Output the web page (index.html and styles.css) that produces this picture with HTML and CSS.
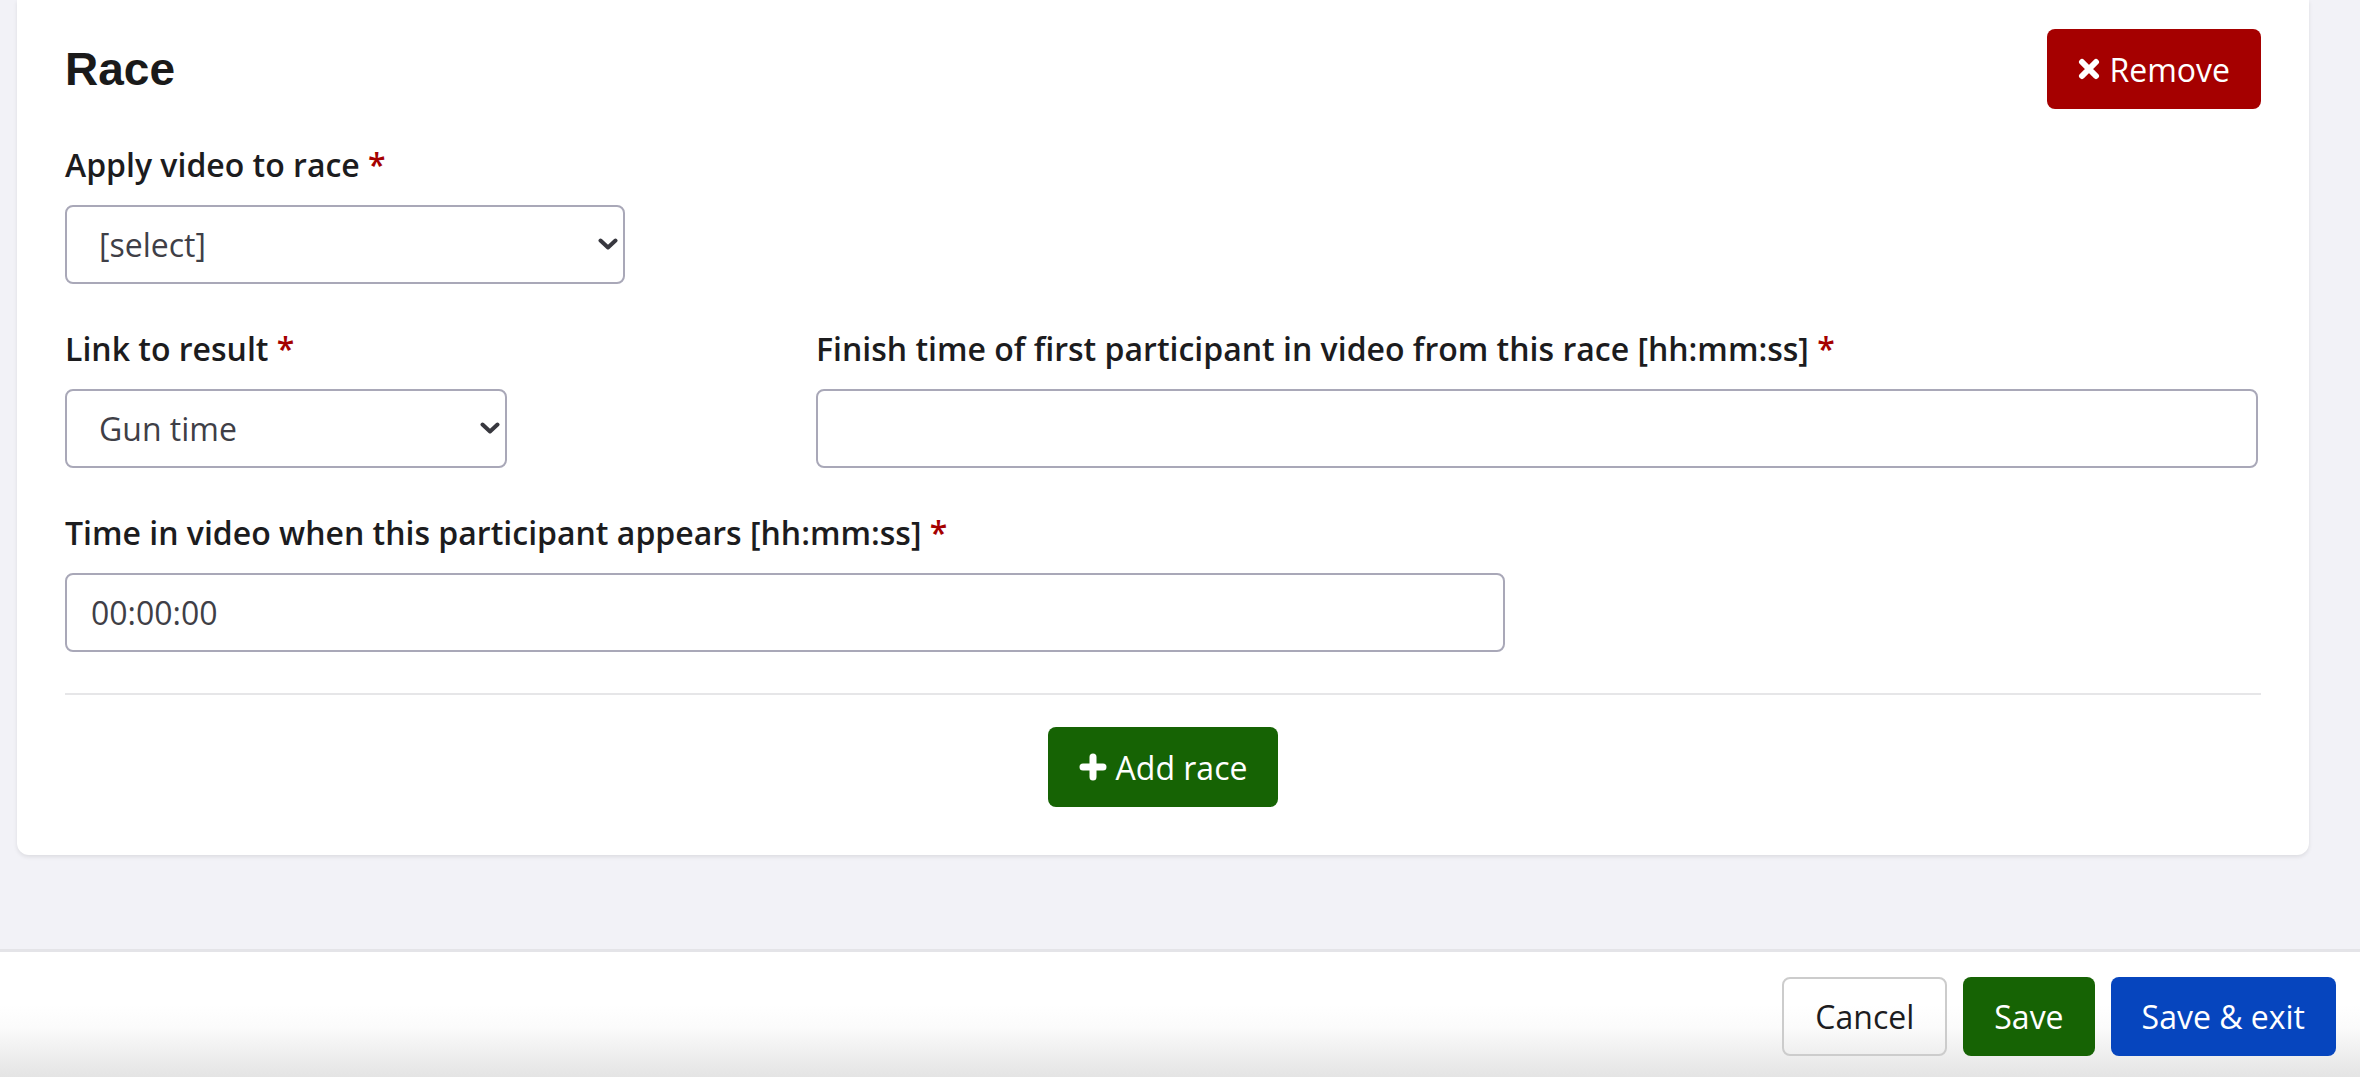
FILE: index.html
```html
<!DOCTYPE html>
<html lang="en">
<head>
<meta charset="utf-8">
<title>Race</title>
<link rel="stylesheet" href="styles.css">
</head>
<body>
<main class="page">
  <section class="card">
    <div class="card-header">
      <h2 class="card-title">Race</h2>
      <button class="btn btn-danger" type="button">
        <svg class="icon icon-x" viewBox="0 0 22 22" aria-hidden="true"><path d="M4 4 L18 18 M18 4 L4 18"/></svg>
        Remove
      </button>
    </div>

    <div class="form-group">
      <label class="form-label">Apply video to race <span class="req">*</span></label>
      <div class="select-wrap select-race">
        <select class="form-select"><option>[select]</option></select>
        <svg class="chevron" viewBox="0 0 20 12" aria-hidden="true"><path d="M2.5 2.5 L10 9.5 L17.5 2.5"/></svg>
      </div>
    </div>

    <div class="form-row">
      <div class="form-group">
        <label class="form-label">Link to result <span class="req">*</span></label>
        <div class="select-wrap select-result">
          <select class="form-select"><option>Gun time</option></select>
          <svg class="chevron" viewBox="0 0 20 12" aria-hidden="true"><path d="M2.5 2.5 L10 9.5 L17.5 2.5"/></svg>
        </div>
      </div>
      <div class="form-group">
        <label class="form-label">Finish time of first participant in video from this race [hh:mm:ss] <span class="req">*</span></label>
        <input class="form-input input-finish" type="text" value="">
      </div>
    </div>

    <div class="form-group">
      <label class="form-label">Time in video when this participant appears [hh:mm:ss] <span class="req">*</span></label>
      <input class="form-input input-time" type="text" value="00:00:00">
    </div>

    <hr class="divider">

    <div class="center-actions">
      <button class="btn btn-success" type="button">
        <svg class="icon icon-plus" viewBox="0 0 28 28" aria-hidden="true"><path d="M14 4 L14 24 M4 14 L24 14"/></svg>
        Add race
      </button>
    </div>
  </section>
</main>

<footer class="footer">
  <button class="btn btn-default" type="button">Cancel</button>
  <button class="btn btn-success" type="button">Save</button>
  <button class="btn btn-primary" type="button">Save &amp; exit</button>
</footer>
</body>
</html>
```

FILE: styles.css
```css
* { box-sizing: border-box; }

html, body {
  margin: 0;
  padding: 0;
  height: 100%;
}

body {
  display: flex;
  flex-direction: column;
  height: 100vh;
  overflow: hidden;
  background: #f2f2f7;
  font-family: "Open Sans", "DejaVu Sans", sans-serif;
  color: #1c1c1e;
}

.page {
  flex: 1;
  padding: 0 51px 0 17px;
}

.card {
  background: #ffffff;
  border-radius: 0 0 12px 12px;
  box-shadow: 0 2px 4px rgba(0, 0, 0, 0.09);
  padding: 29px 48px 48px;
}

.card-header {
  display: flex;
  align-items: center;
  justify-content: space-between;
  margin-bottom: 32px;
}

.card-title {
  margin: 0;
  font-family: "Liberation Sans", Arial, sans-serif;
  font-weight: 700;
  font-size: 46px;
  line-height: 52px;
  color: #1a1a1a;
}

.form-group {
  margin-bottom: 41px;
}

.form-label {
  display: block;
  font-size: 32px;
  font-weight: 600;
  line-height: 48px;
  margin-bottom: 16px;
  color: #1c1c1e;
  white-space: nowrap;
}

.req {
  color: #a50000;
}

.select-wrap {
  position: relative;
}

.select-race { width: 560px; }
.select-result { width: 442px; }

.form-select,
.form-input {
  display: block;
  width: 100%;
  height: 79px;
  border: 2px solid #a9a8b8;
  border-radius: 8px;
  background: #ffffff;
  font-family: "Open Sans", sans-serif;
  font-size: 32px;
  color: #3f3f47;
  outline: none;
}

.form-select {
  -webkit-appearance: none;
  appearance: none;
  padding: 0 40px 0 32px;
}

.form-input {
  padding: 0 24px;
}

.input-time {
  width: 1440px;
}

.input-finish {
  width: calc(100% - 3px);
}

.chevron {
  position: absolute;
  right: 7px;
  top: 33px;
  width: 20px;
  height: 12px;
  fill: none;
  stroke: #38383f;
  stroke-width: 4;
  stroke-linecap: round;
  stroke-linejoin: round;
  pointer-events: none;
}

.form-row {
  display: grid;
  grid-template-columns: 703px 1fr;
  column-gap: 48px;
}

.divider {
  border: 0;
  height: 2px;
  background: #e6e6e8;
  margin: 0 0 32px;
}

.center-actions {
  display: flex;
  justify-content: center;
}

.btn {
  display: inline-flex;
  align-items: center;
  justify-content: center;
  gap: 9px;
  height: 80px;
  padding: 0 31px;
  border: none;
  border-radius: 8px;
  font-family: "Open Sans", sans-serif;
  font-size: 32px;
  font-weight: 400;
  color: #ffffff;
  cursor: pointer;
}

.btn-danger { background: #a50000; }
.btn-success { background: #166304; }
.btn-primary { background: #0645be; }

.btn-default {
  background: transparent;
  color: #1c1c1e;
  border: 2px solid #cccccc;
}

.icon {
  fill: none;
  stroke: #ffffff;
  stroke-linecap: round;
}

.icon-x {
  width: 22px;
  height: 22px;
  stroke-width: 6;
}

.icon-plus {
  width: 28px;
  height: 28px;
  stroke-width: 7;
}

.footer {
  flex: 0 0 128px;
  display: flex;
  justify-content: flex-end;
  align-items: flex-start;
  gap: 16px;
  padding: 25px 24px 0;
  border-top: 3px solid #e4e4e8;
  background: linear-gradient(to bottom, #ffffff 0%, #ffffff 42%, #fbfbfb 60%, #e4e4e4 100%);
}

.footer .btn {
  height: 79px;
}
```
